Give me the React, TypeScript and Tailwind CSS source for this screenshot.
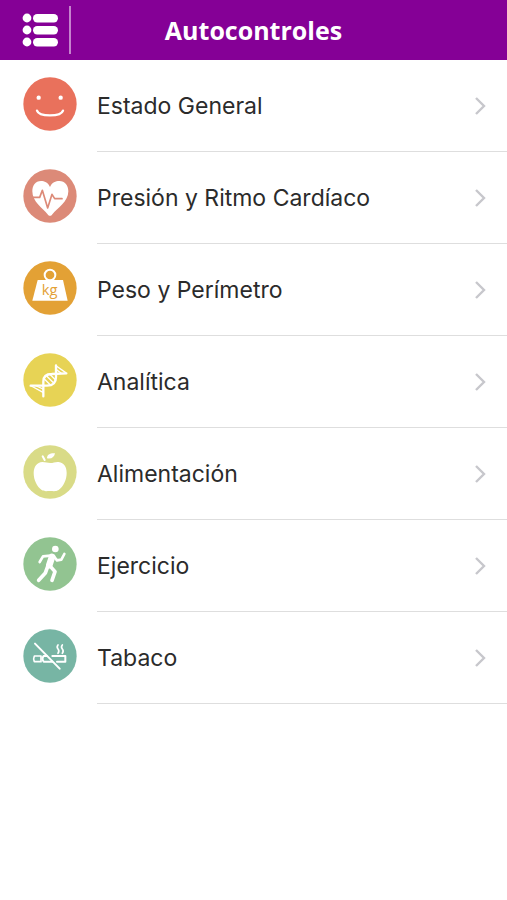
import type { ReactNode } from 'react';

interface ControlItem {
  label: string;
  color: string;
  icon: ReactNode;
}

const line = {
  fill: 'none',
  stroke: 'white',
  strokeLinecap: 'round',
  strokeLinejoin: 'round',
} as const;

function SmileIcon() {
  return (
    <g>
      <circle cx="47" cy="62" r="6.5" fill="white" />
      <circle cx="113" cy="62" r="6.5" fill="white" />
      <path d="M42 101c6 19 72 19 78 0" {...line} strokeWidth="7" />
    </g>
  );
}

function HeartIcon() {
  return (
    <g>
      <path
        d="M81 54C75 40 64 36 54 36C37 36 28 50 28 67C28 98 58 117 75 137Q81 144 87 137C104 117 136 98 136 67C136 50 126 36 109 36C98 36 87 40 81 54Z"
        fill="white"
      />
      <path
        d="M30 85H50L58 64L74 117L87 76L95 89H117"
        {...line}
        stroke="#dc8a78"
        strokeWidth="5"
      />
    </g>
  );
}

function WeightIcon() {
  return (
    <g>
      <circle cx="81" cy="42" r="16" {...line} strokeWidth="6" />
      <path d="M44 57H120L134 119H28Z" fill="white" />
      <text
        x="80"
        y="101"
        textAnchor="middle"
        fill="#e3a135"
        fontSize="44"
        className="font-['Open_Sans',sans-serif]"
      >
        kg
      </text>
    </g>
  );
}

function DnaIcon() {
  return (
    <g {...line}>
      <path d="M23 98H72C90 98 99 88 99 72V37" strokeWidth="7" />
      <path d="M61 130V86C61 70 72 63 86 63L130 61" strokeWidth="7" />
      <path d="M25 99L60 118M40 99L60 108M100 39L128 59M100 50L114 60" strokeWidth="4" />
      <path d="M64 78L83 97M71 69L92 90M82 65L97 80" strokeWidth="4" />
    </g>
  );
}

function AppleIcon() {
  return (
    <g>
      <path
        d="M58 51C68 51 73 54 82 54C91 54 97 50 107 51C123 53 131 66 131 84C131 105 121 125 107 135C98 140 91 138 81 138C71 138 64 140 56 135C42 125 32 105 32 84C32 65 42 52 58 51Z"
        fill="white"
      />
      <path d="M72 40C72 28 82 24 96 25C94 37 85 43 72 40Z" fill="white" />
      <path d="M59 34L65 45" {...line} strokeWidth="6" />
    </g>
  );
}

function RunnerIcon() {
  return (
    <g {...line}>
      <circle cx="97" cy="36" r="10" fill="white" stroke="none" />
      <path d="M87 60L79 84" strokeWidth="20" />
      <path d="M83 56L60 58L50 75" strokeWidth="8" />
      <path d="M92 57L102 70L115 68L124 51" strokeWidth="8" />
      <path d="M75 86L67 108L47 130" strokeWidth="11" />
      <path d="M82 88L96 104L87 130" strokeWidth="11" />
    </g>
  );
}

function NoSmokingIcon() {
  return (
    <g {...line}>
      <path d="M34 81H54V98H34Q30 89 34 81Z" strokeWidth="5" />
      <path d="M72 81H62Q55 89 62 98H88" strokeWidth="6" />
      <path d="M88 81H127V98H102" strokeWidth="6" />
      <path d="M105 48Q100 54 105 60T105 73M118 48Q113 54 118 60T118 73" strokeWidth="5" />
      <path d="M36 44L110 119" strokeWidth="6" />
    </g>
  );
}

const items: ControlItem[] = [
  { label: 'Estado General', color: '#e9715c', icon: <SmileIcon /> },
  { label: 'Presión y Ritmo Cardíaco', color: '#dc8a78', icon: <HeartIcon /> },
  { label: 'Peso y Perímetro', color: '#e3a135', icon: <WeightIcon /> },
  { label: 'Analítica', color: '#e7d355', icon: <DnaIcon /> },
  { label: 'Alimentación', color: '#d9db87', icon: <AppleIcon /> },
  { label: 'Ejercicio', color: '#92c491', icon: <RunnerIcon /> },
  { label: 'Tabaco', color: '#77b5a4', icon: <NoSmokingIcon /> },
];

function Header() {
  return (
    <header className="grid h-[60px] grid-cols-[71px_1fr_71px] items-center bg-[#850096]">
      <div className="flex h-12 items-center border-r-2 border-[#c583ce] pl-[22px]">
        <button type="button" aria-label="Menú">
          <svg width="36" height="34" viewBox="0 0 36 34" fill="white" className="block">
            {/* Bullet and bar for each menu line */}
            {[0, 12, 24].map((y) => (
              <g key={y}>
                <circle cx="5" cy={y + 5} r="4.4" />
                <rect x="11" y={y + 1} width="25" height="8.4" rx="4.2" />
              </g>
            ))}
          </svg>
        </button>
      </div>
      <h1 className="text-center font-['Open_Sans','Noto_Sans',sans-serif] text-[25px] leading-8 font-bold text-white">
        Autocontroles
      </h1>
    </header>
  );
}

function ControlRow({ label, color, icon }: ControlItem) {
  return (
    <li>
      <a href="#" className="flex items-center gap-5 pl-[23px]">
        <svg
          width="54"
          height="54"
          viewBox="0 0 162 162"
          className="mb-1 shrink-0"
          aria-hidden="true"
        >
          <circle cx="81" cy="81" r="80" fill={color} />
          {icon}
        </svg>
        <span className="flex h-[92px] flex-1 items-center justify-between border-b border-[#dedede] pr-5">
          <span className="text-[23px] leading-8 text-[#2b2b2b]">{label}</span>
          <svg width="14" height="20" viewBox="0 0 14 20" aria-hidden="true">
            <path d="M3 2L11 10L3 18" fill="none" stroke="#c7c7cc" strokeWidth="2.4" />
          </svg>
        </span>
      </a>
    </li>
  );
}

export default function App() {
  return (
    <div className="min-h-screen bg-white font-['Inter',sans-serif]">
      <Header />
      <main>
        <ul>
          {items.map((item) => (
            <ControlRow key={item.label} {...item} />
          ))}
        </ul>
      </main>
    </div>
  );
}
